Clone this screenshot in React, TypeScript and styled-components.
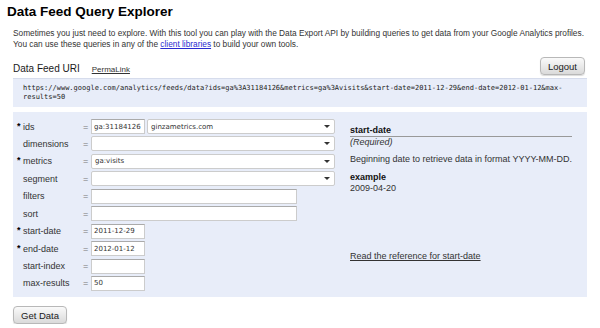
import styled, { createGlobalStyle } from 'styled-components'

const GlobalStyle = createGlobalStyle`
    html, body {
        margin: 0;
        padding: 0;
        background: #fff;
    }
    body {
        font-family: 'Liberation Sans', Arial, sans-serif;
        color: #333;
    }
`

const fields = [
    { name: 'ids', required: true, kind: 'ids', value: 'ga:31184126', option: 'ginzametrics.com' },
    { name: 'dimensions', kind: 'select', value: '' },
    { name: 'metrics', required: true, kind: 'select', value: 'ga:visits' },
    { name: 'segment', kind: 'select', value: '' },
    { name: 'filters', kind: 'text', value: '' },
    { name: 'sort', kind: 'text', value: '' },
    { name: 'start-date', required: true, kind: 'short', value: '2011-12-29' },
    { name: 'end-date', required: true, kind: 'short', value: '2012-01-12' },
    { name: 'start-index', kind: 'short', value: '' },
    { name: 'max-results', kind: 'short', value: '50' },
]

const uri =
    'https://www.google.com/analytics/feeds/data?ids=ga%3A31184126&metrics=ga%3Avisits&start-date=2011-12-29&end-date=2012-01-12&max-results=50'

export default function App() {
    return (
        <>
            <GlobalStyle />
            <Page>
                <Title>Data Feed Query Explorer</Title>
                <Intro>
                    Sometimes you just need to explore. With this tool you can play with the Data Export
                    API by building queries to get data from your Google Analytics profiles.
                    <br />
                    You can use these queries in any of the <IntroLink href="#">client libraries</IntroLink>{' '}
                    to build your own tools.
                </Intro>
                <UriHeader>
                    <UriTitle>Data Feed URI</UriTitle>
                    <PermaLink href="#">PermaLink</PermaLink>
                    <Spacer />
                    <Button $top>Logout</Button>
                </UriHeader>
                <UriBox>{uri}</UriBox>
                <QueryBox>
                    <Form>
                        {fields.map((f) => (
                            <Row key={f.name}>
                                <Label>
                                    <Star>{f.required ? '*' : ''}</Star>
                                    {f.name}
                                </Label>
                                <Equals>=</Equals>
                                {f.kind === 'ids' && (
                                    <>
                                        <TextInput $width={54} defaultValue={f.value} />
                                        <Select $width={188}>
                                            <span>{f.option}</span>
                                            <Arrow />
                                        </Select>
                                    </>
                                )}
                                {f.kind === 'select' && (
                                    <Select $width={244}>
                                        <span>{f.value}</span>
                                        <Arrow />
                                    </Select>
                                )}
                                {f.kind === 'text' && <TextInput $width={206} defaultValue={f.value} />}
                                {f.kind === 'short' && <TextInput $width={54} defaultValue={f.value} />}
                            </Row>
                        ))}
                    </Form>
                    <Help>
                        <HelpTitle>start-date</HelpTitle>
                        <Required>(Required)</Required>
                        <HelpText>Beginning date to retrieve data in format YYYY-MM-DD.</HelpText>
                        <ExampleTitle>example</ExampleTitle>
                        <ExampleValue>2009-04-20</ExampleValue>
                        <RefLink href="#">Read the reference for start-date</RefLink>
                    </Help>
                </QueryBox>
                <Footer>
                    <Button>Get Data</Button>
                </Footer>
            </Page>
        </>
    )
}

const Page = styled.div`
    width: 574px;
    padding: 4px 13px 0;
    display: flex;
    flex-direction: column;
`

const Title = styled.h1`
    margin: 0 0 0 -6px;
    font-size: 13.5px;
    line-height: 16px;
    font-weight: bold;
    color: #000;
`

const Intro = styled.p`
    margin: 8px 0 0;
    font-size: 8.3px;
    line-height: 11px;
    color: #333;
`

const IntroLink = styled.a`
    color: #2a2ad0;
    text-decoration: underline;
`

const UriHeader = styled.div`
    display: flex;
    align-items: flex-end;
    margin-top: 7px;
    height: 20px;
`

const UriTitle = styled.span`
    font-size: 10px;
    line-height: 12px;
    margin-bottom: 2px;
    color: #1a1a1a;
`

const PermaLink = styled.a`
    margin-left: 12px;
    margin-bottom: 2px;
    font-size: 8px;
    line-height: 11px;
    color: #333;
    text-decoration: underline;
`

const Spacer = styled.div`
    flex: 1;
`

const Button = styled.button<{ $top?: boolean }>`
    align-self: ${(p) => (p.$top ? 'flex-start' : 'auto')};
    margin-right: ${(p) => (p.$top ? 2 : 0)}px;
    height: 18px;
    padding: 0 7px;
    border: 1px solid #b8b8b8;
    border-radius: 4px;
    background: linear-gradient(180deg, #fafafa, #dadada);
    box-shadow: 0 1px 1px rgba(0, 0, 0, 0.15);
    font-family: 'Liberation Sans', Arial, sans-serif;
    font-size: 9.5px;
    color: #1a1a1a;
`

const UriBox = styled.div`
    margin-top: 1px;
    padding: 5px 24px 5px 10px;
    background: #e8edf9;
    border-top: 1px solid #d6dcec;
    font-family: 'DejaVu Sans Mono', monospace;
    font-size: 7px;
    line-height: 9px;
    color: #222;
`

const QueryBox = styled.div`
    margin-top: 5px;
    padding: 7px 0 6px 4px;
    background: #e8edf9;
    display: flex;
`

const Form = styled.div`
    width: 318px;
    display: flex;
    flex-direction: column;
    gap: 2.45px;
`

const Row = styled.div`
    display: flex;
    align-items: center;
    height: 15px;
`

const Label = styled.div`
    width: 66px;
    display: flex;
    align-items: center;
    font-size: 9px;
    color: #333;
`

const Star = styled.span`
    width: 6px;
    font-size: 9px;
    font-weight: bold;
    color: #000;
    align-self: flex-start;
    margin-top: -1px;
`

const Equals = styled.span`
    width: 8px;
    font-size: 9px;
    color: #777;
`

const TextInput = styled.input<{ $width: number }>`
    box-sizing: border-box;
    width: ${(p) => p.$width}px;
    height: 15px;
    margin-right: 2px;
    padding: 0 2px;
    border: 1px solid #ccc;
    border-top-color: #aaa;
    background: #fff;
    font-family: 'DejaVu Sans', sans-serif;
    font-size: 7px;
    color: #333;
    outline: none;
`

const Select = styled.div<{ $width: number }>`
    box-sizing: border-box;
    width: ${(p) => p.$width}px;
    height: 15px;
    padding: 0 4px 0 3px;
    border: 1px solid #ccc;
    border-radius: 2px;
    background: #fff;
    display: flex;
    align-items: center;
    justify-content: space-between;
    font-family: 'DejaVu Sans', sans-serif;
    font-size: 7px;
    color: #333;
`

const Arrow = styled.span`
    width: 0;
    height: 0;
    border-left: 3px solid transparent;
    border-right: 3px solid transparent;
    border-top: 3.5px solid #333;
`

const Help = styled.div`
    flex: 1;
    padding: 6px 17px 0 15px;
    display: flex;
    flex-direction: column;
    font-size: 9px;
    line-height: 11px;
    color: #333;
    white-space: nowrap;
`

const HelpTitle = styled.div`
    font-weight: bold;
    color: #111;
    border-bottom: 1px solid #999;
`

const Required = styled.div`
    font-style: italic;
`

const HelpText = styled.div`
    margin-top: 6px;
`

const ExampleTitle = styled.div`
    margin-top: 7px;
    font-weight: bold;
    color: #111;
`

const ExampleValue = styled.div``

const RefLink = styled.a`
    margin-top: 57px;
    align-self: flex-start;
    color: #333;
    text-decoration: underline;
`

const Footer = styled.div`
    padding-top: 8px;
`
